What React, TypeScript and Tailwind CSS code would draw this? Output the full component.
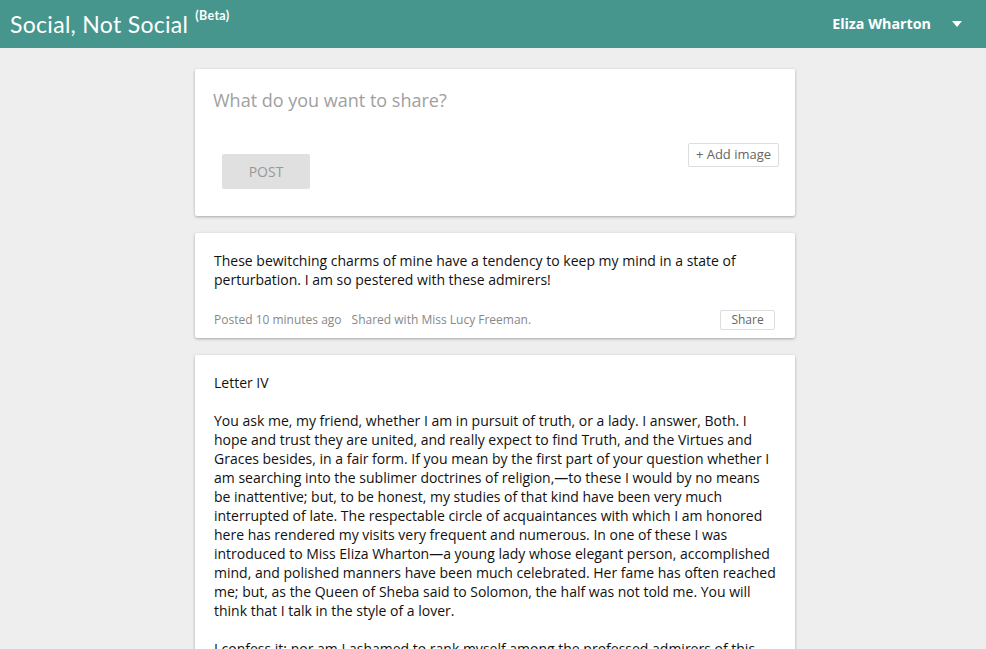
const letter = `Letter IV

You ask me, my friend, whether I am in pursuit of truth, or a lady. I answer, Both. I hope and trust they are united, and really expect to find Truth, and the Virtues and Graces besides, in a fair form. If you mean by the first part of your question whether I am searching into the sublimer doctrines of religion,—to these I would by no means be inattentive; but, to be honest, my studies of that kind have been very much interrupted of late. The respectable circle of acquaintances with which I am honored here has rendered my visits very frequent and numerous. In one of these I was introduced to Miss Eliza Wharton—a young lady whose elegant person, accomplished mind, and polished manners have been much celebrated. Her fame has often reached me; but, as the Queen of Sheba said to Solomon, the half was not told me. You will think that I talk in the style of a lover.

I confess it; nor am I ashamed to rank myself among the professed admirers of this accomplished fair. Her heart is the object of my pursuit, and I shall not easily relinquish it.`;

export default function App() {
  return (
    <div className="min-h-screen bg-[#eeeeee] font-['Open_Sans',sans-serif] text-[14px] text-[#111]">
      <header className="h-12 bg-[#47968e] flex items-center justify-between pl-[10px] pr-[24px] text-white">
        <div className="flex items-start font-['Lato',sans-serif] tracking-[0.3px]">
          <span className="text-[23px] leading-none">Social, Not Social</span>
          <span className="ml-[7px] text-[12.5px] font-bold leading-none -mt-[3px]">(Beta)</span>
        </div>
        <div className="flex items-center gap-[21px]">
          <span className="font-bold text-[14.3px]">Eliza Wharton</span>
          <svg width="10" height="6" viewBox="0 0 10 6"><path d="M0 0h10L5 6z" fill="white" /></svg>
        </div>
      </header>

      <main className="w-[604px] mx-auto pl-[4px] pt-[21px] flex flex-col gap-[17px]">
        <div className="bg-white shadow-[0_1px_3px_rgba(0,0,0,0.3)] rounded-[2px] h-[147px] px-[18px] pt-[19px]">
          <div className="text-[18px] text-[#a0a0a0] leading-[24px]">What do you want to share?</div>
          <div className="flex justify-between items-start mt-[31px]">
            <button className="ml-[9px] mt-[11px] w-[88px] h-[35px] bg-[#e0e0e0] text-[#999] text-[14px] rounded-[2px]">POST</button>
            <button className="mr-[-2px] h-[24px] w-[91px] border border-[#ddd] rounded-[2px] text-[13px] text-[#666]">+ Add image</button>
          </div>
        </div>

        <div className="bg-white shadow-[0_1px_3px_rgba(0,0,0,0.3)] rounded-[2px] px-[19px] pt-[18px] pb-[8px]">
          <p className="leading-[19px]">These bewitching charms of mine have a tendency to keep my mind in a state of perturbation. I am so pestered with these admirers!</p>
          <div className="flex items-center justify-between mt-[21px]">
            <div className="text-[12px] text-[#888] flex gap-[10px]">
              <span>Posted 10 minutes ago</span>
              <span>Shared with Miss Lucy Freeman.</span>
            </div>
            <button className="h-[20px] w-[55px] mr-[1px] border border-[#ddd] rounded-[2px] text-[12px] text-[#666]">Share</button>
          </div>
        </div>

        <div className="bg-white shadow-[0_1px_3px_rgba(0,0,0,0.3)] rounded-[2px] px-[19px] pt-[18px] pb-[20px]">
          <p className="leading-[19px] whitespace-pre-line">{letter}</p>
        </div>
      </main>
    </div>
  );
}
